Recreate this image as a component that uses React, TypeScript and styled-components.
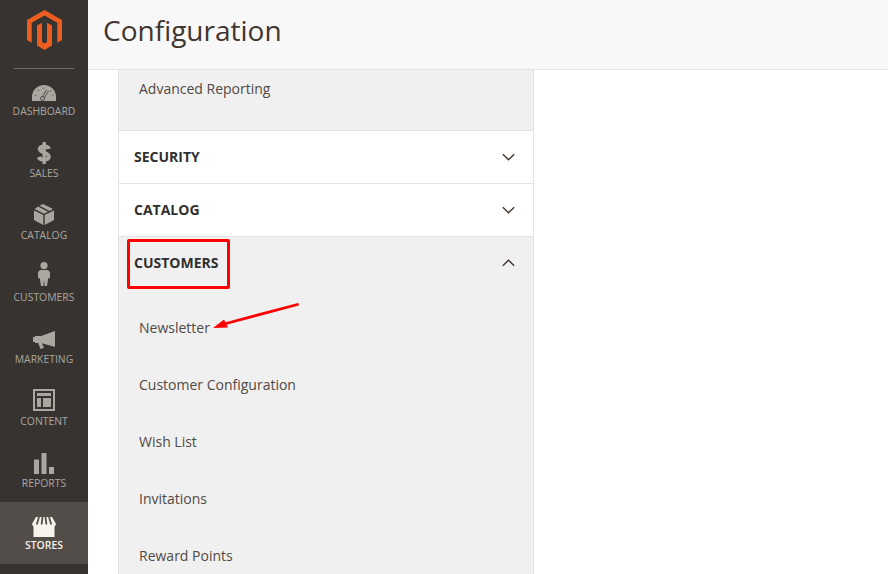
import React from "react";
import styled, { createGlobalStyle } from "styled-components";

const GlobalStyle = createGlobalStyle`
  html, body {
    margin: 0;
    height: 100%;
    background: #fff;
    overflow: hidden;
  }
  body {
    font-family: "Open Sans", "Liberation Sans", sans-serif;
  }
`;

const Page = styled.div`
  position: relative;
  display: flex;
  width: 888px;
  height: 574px;
  overflow: hidden;
`;

const Sidebar = styled.nav`
  display: flex;
  flex-direction: column;
  align-items: stretch;
  width: 88px;
  flex-shrink: 0;
  background: #373330;
`;

const LogoBox = styled.div`
  display: flex;
  justify-content: center;
  padding-top: 10px;
  height: 68px;
  box-sizing: border-box;
`;

const Divider = styled.div`
  height: 1px;
  margin: 0 14px -1px;
  background: #736d66;
`;

const NavList = styled.div`
  display: flex;
  flex-direction: column;
`;

const NavItem = styled.a<{ $active?: boolean }>`
  display: flex;
  flex-direction: column;
  align-items: center;
  height: 62px;
  box-sizing: border-box;
  background: ${({ $active }) => ($active ? "#524d49" : "transparent")};
  color: ${({ $active }) => ($active ? "#f7f3eb" : "#aaa6a0")};
`;

const NavIcon = styled.div<{ $drop?: number }>`
  display: flex;
  align-items: flex-end;
  justify-content: center;
  height: 36px;
  width: 100%;
  box-sizing: border-box;
  padding-bottom: ${({ $drop }) => 3 - ($drop ?? 0)}px;
`;

const NavLabel = styled.span<{ $active?: boolean }>`
  font-size: 10.4px;
  line-height: 18px;
  margin-top: -2px;
  text-transform: uppercase;
  font-weight: ${({ $active }) => ($active ? 600 : 400)};
`;

const Main = styled.main`
  display: flex;
  flex-direction: column;
  flex: 1;
  min-width: 0;
`;

const Header = styled.header`
  display: flex;
  align-items: center;
  flex-shrink: 0;
  height: 70px;
  box-sizing: border-box;
  padding: 0 0 10px 15px;
  background: #f8f8f8;
  border-bottom: 1px solid #e3e3e3;
`;

const Title = styled.h1`
  margin: 0;
  font-size: 28px;
  font-weight: 400;
  color: #41362f;
`;

const Panel = styled.div`
  width: 416px;
  margin-left: 30px;
  box-sizing: border-box;
  border-left: 1px solid #e3e3e3;
  border-right: 1px solid #e3e3e3;
`;

const SubList = styled.div<{ $top?: number; $trail?: number }>`
  display: flex;
  flex-direction: column;
  background: #f0f0f0;
  padding-top: ${({ $top }) => $top ?? 0}px;
  padding-bottom: ${({ $trail }) => $trail ?? 0}px;
`;

const SubLink = styled.a`
  display: flex;
  align-items: center;
  height: 57px;
  padding-left: 20px;
  font-size: 14px;
  color: #514943;
`;

const FirstSubLink = styled(SubLink)`
  height: 36px;
`;

const SectionRow = styled.div<{ $open?: boolean }>`
  display: flex;
  align-items: center;
  justify-content: space-between;
  height: 53px;
  box-sizing: border-box;
  padding: 0 18px 2px 15px;
  border-top: 1px solid #e3e3e3;
  background: ${({ $open }) => ($open ? "#f0f0f0" : "#fff")};
`;

const SectionTitle = styled.span`
  font-size: 14px;
  font-weight: 700;
  color: #303030;
  text-transform: uppercase;
`;

const HighlightBox = styled.div`
  position: absolute;
  left: 127px;
  top: 239px;
  width: 103px;
  height: 50px;
  box-sizing: border-box;
  border: 3px solid #f00;
  border-radius: 2px;
`;

const ArrowMark = styled.svg`
  position: absolute;
  left: 210px;
  top: 298px;
`;

const ChevronMark = styled.svg`
  margin-top: 2px;
`;

const Chevron = ({ up }: { up?: boolean }) => (
  <ChevronMark width="13" height="8" viewBox="0 0 13 8">
    <path
      d={up ? "M0.8 6.8 L6.5 1.2 L12.2 6.8" : "M0.8 1.2 L6.5 6.8 L12.2 1.2"}
      fill="none"
      stroke="#41362f"
      strokeWidth="1.4"
    />
  </ChevronMark>
);

const Logo = () => (
  <svg width="35" height="40" viewBox="0 0 35 40">
    <path
      fill="#eb5e1f"
      d="M17.5 0 L35 10 V30 L30.3 32.7 V12.8 L17.5 5.4 L4.7 12.8 V32.7 L0 30 V10 Z"
    />
    <path
      fill="#eb5e1f"
      d="M10 15.4 L15 12.7 V32 L17.5 33.6 L20 32 V12.7 L25 15.4 V35.5 L17.5 40 L10 35.5 Z"
    />
  </svg>
);

const DashboardIcon = () => (
  <svg width="24" height="16" viewBox="0 0 24 16">
    <path fill="#aaa6a0" d="M0 16 V12 A12 12 0 0 1 24 12 V16 Z" />
    <path stroke="#373330" strokeWidth="3" d="M10.5 13.5 L15.5 5.5" />
    <path stroke="#aaa6a0" strokeWidth="1.6" d="M10.5 13.5 L15.5 5.5" />
    <circle cx="10.5" cy="13.5" r="2" fill="#aaa6a0" stroke="#373330" strokeWidth="0.8" />
    <g fill="#6e6a65">
      <circle cx="3.5" cy="10.5" r="0.8" />
      <circle cx="6.5" cy="5.5" r="0.8" />
      <circle cx="12" cy="3.2" r="0.8" />
      <circle cx="18.5" cy="6" r="0.8" />
      <circle cx="20.8" cy="10.5" r="0.8" />
    </g>
  </svg>
);

const SalesIcon = () => (
  <svg width="14" height="22" viewBox="0 0 14 22">
    <path
      fill="none"
      stroke="#aaa6a0"
      strokeWidth="4"
      d="M12 6.8 C11 4 3.8 3.4 2.8 6.6 C2 10.5 12.4 10.5 11.8 15 C11.2 18.4 3.2 18.6 1.8 15"
    />
    <rect x="5.5" width="3.4" height="22" fill="#aaa6a0" />
  </svg>
);

const CatalogIcon = () => (
  <svg width="20" height="21" viewBox="0 0 20 21">
    <path fill="#aaa6a0" d="M0 6.5 L9.3 11 V21 L0 16 Z" />
    <path fill="#aaa6a0" d="M20 6.5 L10.7 11 V21 L20 16 Z" />
    <path fill="#aaa6a0" d="M5.5 1.8 L9 0 L19 5 L15.5 7 Z" />
    <path fill="#aaa6a0" d="M4 2.6 L14 7.8 L10 9.8 L0.6 5 Z" />
  </svg>
);

const CustomersIcon = () => (
  <svg width="12" height="24" viewBox="0 0 12 24">
    <circle cx="6" cy="3.6" r="3.6" fill="#aaa6a0" />
    <path
      fill="#aaa6a0"
      d="M2 8 H10 L12 10 V16 L10.2 16.5 L9 24 H6.6 L6 18 L5.4 24 H3 L1.8 16.5 L0 16 V10 Z"
    />
  </svg>
);

const MarketingIcon = () => (
  <svg width="22" height="18" viewBox="0 0 22 18">
    <path
      fill="#aaa6a0"
      d="M22 0 V16 L9 12.2 L11 17 L7.5 18 L5.2 12 H2 V11 H0 V6 H2 V5 H8 Z"
    />
  </svg>
);

const ContentIcon = () => (
  <svg width="22" height="22" viewBox="0 0 22 22">
    <path
      fill="#aaa6a0"
      fillRule="evenodd"
      d="M0 0 H22 V22 H0 Z M2 2 V20 H20 V2 Z"
    />
    <path fill="#aaa6a0" d="M4 4 H18 V7 H4 Z M4 9 H8 V18 H4 Z M10 9 H18 V18 H10 Z" />
  </svg>
);

const ReportsIcon = () => (
  <svg width="20" height="21" viewBox="0 0 20 21">
    <path fill="#aaa6a0" d="M0 6.5 H5 V21 H0 Z M7.5 0 H12.5 V21 H7.5 Z M15 14 H20 V21 H15 Z" />
  </svg>
);

const StoresIcon = () => (
  <svg width="24" height="20" viewBox="0 0 24 20">
    <path
      fill="#f7f3eb"
      d="M1.5 10 H22.5 V20 H1.5 Z M4 0 H20 L24 7 L22.5 10 H1.5 L0 7 Z"
    />
    <path
      stroke="#524d49"
      strokeWidth="1.8"
      d="M7 0 L4.8 7.5 M10.5 0 L9.6 7.5 M13.5 0 L14.4 7.5 M17 0 L19.2 7.5"
    />
  </svg>
);

const navItems: { label: string; icon: React.ReactNode; drop?: number; active?: boolean }[] = [
  { label: "Dashboard", icon: <DashboardIcon /> },
  { label: "Sales", icon: <SalesIcon />, drop: 1 },
  { label: "Catalog", icon: <CatalogIcon /> },
  { label: "Customers", icon: <CustomersIcon />, drop: -1 },
  { label: "Marketing", icon: <MarketingIcon /> },
  { label: "Content", icon: <ContentIcon /> },
  { label: "Reports", icon: <ReportsIcon />, drop: 1 },
  { label: "Stores", icon: <StoresIcon />, drop: 2, active: true },
];

const customerLinks = [
  "Newsletter",
  "Customer Configuration",
  "Wish List",
  "Invitations",
  "Reward Points",
];

export default function App() {
  return (
    <Page>
      <GlobalStyle />
      <Sidebar>
        <LogoBox>
          <Logo />
        </LogoBox>
        <Divider />
        <NavList>
          {navItems.map((item) => (
            <NavItem key={item.label} $active={item.active}>
              <NavIcon $drop={item.drop}>{item.icon}</NavIcon>
              <NavLabel $active={item.active}>{item.label}</NavLabel>
            </NavItem>
          ))}
        </NavList>
      </Sidebar>
      <Main>
        <Header>
          <Title>Configuration</Title>
        </Header>
        <Panel>
          <SubList $trail={24}>
            <FirstSubLink>Advanced Reporting</FirstSubLink>
          </SubList>
          <SectionRow>
            <SectionTitle>Security</SectionTitle>
            <Chevron />
          </SectionRow>
          <SectionRow>
            <SectionTitle>Catalog</SectionTitle>
            <Chevron />
          </SectionRow>
          <SectionRow $open>
            <SectionTitle>Customers</SectionTitle>
            <Chevron up />
          </SectionRow>
          <SubList $top={10}>
            {customerLinks.map((link) => (
              <SubLink key={link}>{link}</SubLink>
            ))}
          </SubList>
        </Panel>
      </Main>
      <HighlightBox />
      <ArrowMark width="90" height="34" viewBox="0 0 90 34">
        <path d="M87.5 6.5 L16 25.5" stroke="#f00" strokeWidth="2.8" strokeLinecap="round" fill="none" />
        <path d="M3 30 L14 21.5 L18 29.5 Z" fill="#f00" />
      </ArrowMark>
    </Page>
  );
}
